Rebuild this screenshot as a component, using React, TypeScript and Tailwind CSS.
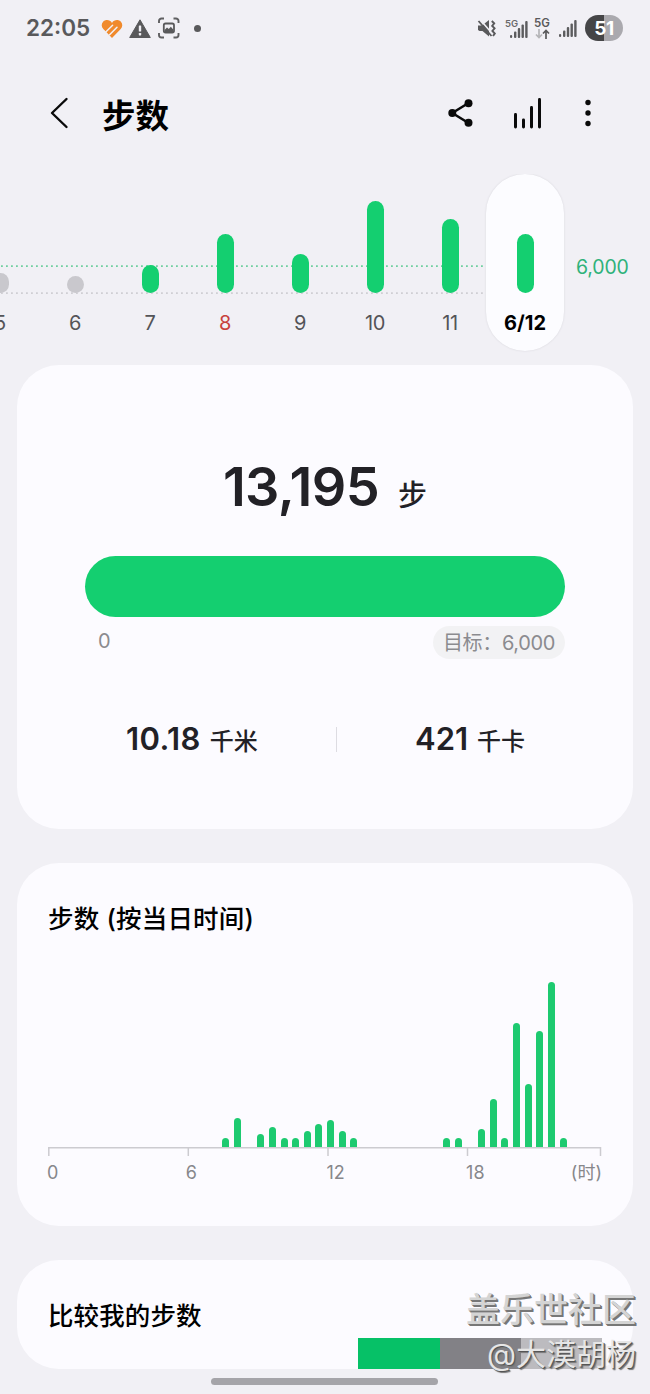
type Day = {
  label: string;
  height: number;
  reached: boolean;
  holiday?: boolean;
};

const days: Day[] = [
  { label: "5", height: 20, reached: false },
  { label: "6", height: 17, reached: false },
  { label: "7", height: 28, reached: true },
  { label: "8", height: 59, reached: true, holiday: true },
  { label: "9", height: 39, reached: true },
  { label: "10", height: 92, reached: true },
  { label: "11", height: 74, reached: true },
];

// One entry per half hour, value is the bar height in px
const halfHours: number[] = [
  0, 0, 0, 0, 0, 0, 0, 0, 0, 0, 0, 0, 0, 0, 0, 9, 29, 0, 13, 20, 9, 9, 16, 23, 27, 16, 9, 0, 0, 0,
  0, 0, 0, 0, 9, 9, 0, 18, 48, 9, 124, 63, 116, 165, 9, 0, 0, 0,
];

function SignalBars() {
  return (
    <svg width="18" height="18" viewBox="0 0 18 18" fill="#5c5c5e">
      <rect x="0" y="15" width="2.2" height="3" rx="1" />
      <rect x="4" y="11.5" width="2.4" height="6.5" rx="1" />
      <rect x="7.8" y="8" width="2.4" height="10" rx="1" />
      <rect x="11.5" y="4.5" width="2.4" height="13.5" rx="1" />
      <rect x="15.2" y="1" width="2.4" height="17" rx="1" />
    </svg>
  );
}

function StatusBar() {
  return (
    <div className="flex h-14 items-center justify-between pr-[27px] pl-[26px]">
      <div className="flex items-center">
        <span className="w-[75px] text-[22.5px] leading-[56px] font-semibold text-[#59595b]">22:05</span>
        <svg className="mt-px" width="22" height="20" viewBox="0 0 22 20" fill="none">
          <path
            d="M11 4C9 .5 4.500.3 2.300 2.600.2 4.800.2 7.800 2.300 10l8.700 9 8.700-9c2.100-2.200 2.100-5.200 0-7.400C17.500.3 13 .5 11 4Z"
            fill="#f08a2c"
          />
          <path d="M11.600 6.200 4.800 13M16 8.200 8.600 15.800" stroke="#f1f0f5" strokeWidth="1.5" strokeLinecap="round" />
          <path d="M2.800 11.800 8.500 17.800" stroke="#f1f0f5" strokeWidth="1.2" />
        </svg>
        <svg className="ml-[6px]" width="22" height="19" viewBox="0 0 22 19">
          <path d="M11 .8 21.3 18.500H.7Z" fill="#59595b" stroke="#59595b" strokeLinejoin="round" />
          <rect x="9.8" y="6.5" width="2.4" height="6" rx=".6" fill="#f1f0f5" />
          <rect x="9.8" y="14" width="2.4" height="2.4" rx=".6" fill="#f1f0f5" />
        </svg>
        <svg className="ml-[6px]" width="24" height="22" viewBox="0 0 24 22" fill="none">
          <path
            d="M2 6V4A2.5 2.5 0 0 1 4.500 1.500H7M16.500 1.500H19A2.500 2.500 0 0 1 21.500 4v2M21.500 16v2A2.500 2.500 0 0 1 19 20.500H16.500M7 20.500H4.500A2.500 2.500 0 0 1 2 18v-2"
            stroke="#5f5f61"
            strokeWidth="1.9"
          />
          <rect x="6.8" y="6.5" width="10.200" height="9" rx="1.8" stroke="#59595b" strokeWidth="1.8" />
          <path d="M7.5 13 10 10.500l1.800 1.600 2-2.400 2.500 2.800V15H7.500Z" fill="#59595b" />
        </svg>
        <span className="ml-[13px] size-[7px] rounded-full bg-[#59595b]" />
      </div>
      <div className="flex items-center">
        <svg width="20" height="19" viewBox="0 0 20 19" fill="#59595b">
          <path d="M1 6.500h4L12 1v16.500L5.500 12H2.500L1 11Z" />
          <path d="M3 .5 16 15.500" stroke="#f1f0f5" strokeWidth="1.600" />
          <path d="m1.500 2 13 15" stroke="#59595b" strokeWidth="1.800" />
          <path
            d="m14.800 2 2.400 2.400-2 2.500 2.400 2.500-2.200 2.600 2.400 2.500-1.800 2.500"
            fill="none"
            stroke="#59595b"
            strokeWidth="1.9"
          />
        </svg>
        <div className="ml-2 flex w-[23px] items-end">
          <span className="mb-[9px] w-[5px] text-[9.5px] leading-[10px] font-semibold text-[#6a6a6c]">5G</span>
          <SignalBars />
        </div>
        <div className="ml-[6px] flex w-[16px] flex-col items-center">
          <span className="text-[11.5px] leading-[11px] font-semibold text-[#59595b]">5G</span>
          <svg width="15" height="10" viewBox="0 0 15 10" fill="none" strokeWidth="1.7">
            <path d="M4 0v8.500M1 5.500l3 3 3-3" stroke="#b5b5b8" />
            <path d="M11 10V1.500M8 4.500l3-3 3 3" stroke="#59595b" />
          </svg>
        </div>
        <div className="ml-[9px]">
          <SignalBars />
        </div>
        <div className="ml-[8px] flex h-[26px] w-[38px] items-center justify-center rounded-full bg-linear-to-r from-[#454547] from-50% to-[#aaa9ae] to-50%">
          <span className="text-[19px] leading-none font-bold tracking-[-0.5px] text-white">51</span>
        </div>
      </div>
    </div>
  );
}

function Header() {
  return (
    <header className="flex h-[118px] items-center pl-[50px]">
      <svg className="-mt-1" width="19" height="32" viewBox="0 0 19 32" fill="none">
        <path
          d="M16.5 2 2 16l14.500 14"
          stroke="#0a0a0a"
          strokeWidth="2.4"
          strokeLinecap="round"
          strokeLinejoin="round"
        />
      </svg>
      <h1 className="mt-[2px] ml-[33px] flex-1 text-[33.5px] leading-[48px] font-bold text-black">步数</h1>
      <svg className="-mt-1" width="26" height="28" viewBox="0 0 26 28" fill="#0a0a0a">
        <path d="M20.5 4 4.300 14l16.200 10" fill="none" stroke="#0a0a0a" strokeWidth="2.5" />
        <circle cx="20.5" cy="4.2" r="4" />
        <circle cx="4.3" cy="14" r="4" />
        <circle cx="20.5" cy="23.8" r="4" />
      </svg>
      <svg className="-mt-1 ml-[39px]" width="30" height="32" viewBox="0 0 30 32" fill="#0a0a0a">
        <rect x="1" y="16" width="3" height="15.5" rx="1.4" />
        <rect x="9" y="21.5" width="3" height="10" rx="1.4" />
        <rect x="17" y="9" width="3" height="22.5" rx="1.4" />
        <rect x="25" y="1" width="3" height="30.5" rx="1.4" />
      </svg>
      <svg className="-mt-1 mr-[59px] ml-[42px]" width="6" height="28" viewBox="0 0 6 28" fill="#0a0a0a">
        <circle cx="3" cy="3.5" r="2.7" />
        <circle cx="3" cy="14" r="2.7" />
        <circle cx="3" cy="24.5" r="2.7" />
      </svg>
    </header>
  );
}

function WeekChart() {
  return (
    <section className="relative flex h-[191px] overflow-hidden">
      <svg className="absolute top-0 left-0" width="485" height="130" fill="none" strokeWidth="1.8">
        <path d="M1 92.200h484" stroke="#6fcf9f" strokeDasharray="1.8 3.2" />
        <path d="M1 119.200h484" stroke="#cfced3" strokeDasharray="1.8 3.2" />
      </svg>
      <div className="relative -ml-[37.5px] flex shrink-0">
        {days.map((day) => (
          <div key={day.label} className="flex w-[75px] flex-col items-center">
            <div className="flex h-[119px] items-end">
              <div
                className={`w-[17px] rounded-full ${day.reached ? "bg-[#14cf70]" : "bg-[#c9c8cd]"}`}
                style={{ height: day.height }}
              />
            </div>
            <span
              className={`mt-[18px] text-[20px] leading-6 tracking-[-0.3px] ${
                day.holiday ? "text-[#c8403c]" : "text-[#545458]"
              }`}
            >
              {day.label}
            </span>
          </div>
        ))}
      </div>
      <div className="-ml-[1.5px] flex h-[177px] w-[78px] shrink-0 flex-col items-center rounded-full bg-[#fcfcff] shadow-[0_0_2px_#d4d3d9]">
        <div className="flex h-[119px] items-end">
          <div className="h-[59px] w-[17px] rounded-full bg-[#14cf70]" />
        </div>
        <span className="mt-[18px] text-[20px] leading-6 font-bold text-black">6/12</span>
      </div>
      <span className="mt-[81px] ml-3 text-[19.5px] leading-6 tracking-[-0.15px] text-[#2fb27a]">6,000</span>
    </section>
  );
}

function SummaryCard() {
  return (
    <section className="mx-[17px] flex h-[464px] flex-col rounded-[42px] bg-[#fcfbff] px-[68px]">
      <div className="mt-[86px] flex h-[72px] items-baseline justify-center text-[#222126]">
        <span className="text-[54px] leading-[72px] font-semibold tracking-[-0.6px]">13,195</span>
        <span className="ml-[19px] text-[29px] leading-[40px] font-medium">步</span>
      </div>
      <div className="mt-[33px] h-[61px] rounded-full bg-[#14cf70]" />
      <div className="mt-[9px] flex h-[33px] justify-between text-[20px] text-[#8b8b8f]">
        <span className="ml-[13px] leading-[31px]">0</span>
        <span className="flex h-[33px] w-[132px] items-center justify-center rounded-full bg-[#f2f2f4] tracking-[-0.35px] whitespace-nowrap">
          目标：6,000
        </span>
      </div>
      <div className="mt-[58px] flex h-[44px] items-center text-[#222126]">
        <div className="flex w-[251px] items-baseline pl-[41px]">
          <span className="text-[31px] leading-[44px] font-semibold tracking-[0.4px]">10.18</span>
          <span className="ml-[9px] text-[24px] leading-[32px] font-medium">千米</span>
        </div>
        <div className="h-[25px] w-px bg-[#dddce2]" />
        <div className="flex items-baseline pl-[78px]">
          <span className="text-[31px] leading-[44px] font-semibold">421</span>
          <span className="ml-[9px] text-[24px] leading-[32px] font-medium">千卡</span>
        </div>
      </div>
    </section>
  );
}

function HourlyCard() {
  return (
    <section className="mx-[17px] mt-[34px] flex h-[363px] flex-col rounded-[42px] bg-[#fcfbff] px-[31px]">
      <h2 className="mt-[38px] h-[36px] text-[25.5px] leading-[36px] font-medium tracking-[0.2px] text-black">
        步数 (按当日时间)
      </h2>
      <div className="mt-[30px] flex h-[180px] w-[553px] items-end overflow-hidden">
        {halfHours.map((height, index) => (
          <div key={index} className="w-[11.64px] shrink-0">
            <div className="w-[7px] rounded-t-full bg-[#1dca70]" style={{ height }} />
          </div>
        ))}
      </div>
      <svg width="554" height="9" fill="none" stroke="#cccbd0" strokeWidth="1.5">
        <path d="M0 .8h553M.8 0v9M140.300 0v9M280 0v9M419.500 0v9M552.500 0v9" />
      </svg>
      <div className="mt-px -ml-px flex h-[32px] text-[18px] leading-[32px] text-[#87878b]">
        <span className="w-[139px]">0</span>
        <span className="w-[141px]">6</span>
        <span className="w-[140px]">12</span>
        <span className="w-[105px]">18</span>
        <span className="whitespace-nowrap">(时)</span>
      </div>
    </section>
  );
}

function CompareCard() {
  return (
    <section className="mx-[17px] mt-[34px] flex h-[109px] flex-col overflow-hidden rounded-[42px] bg-[#fcfbff]">
      <h2 className="mt-[38px] ml-[31px] h-[36px] text-[25.5px] leading-[36px] font-medium tracking-[0.1px] text-black">
        比较我的步数
      </h2>
      <div className="mt-[4px] ml-[341px] flex h-[31px]">
        <div className="w-[82px] bg-[#06c167]" />
        <div className="w-[81px] bg-[#828186]" />
        <div className="w-[81px] bg-[#bcbbbf]" />
      </div>
    </section>
  );
}

export default function App() {
  return (
    <main
      lang="zh-CN"
      className="relative h-[1394px] w-[650px] overflow-hidden bg-[#f1f0f5] font-['Inter','Noto_Sans_CJK_SC',sans-serif]"
    >
      <StatusBar />
      <Header />
      <WeekChart />
      <SummaryCard />
      <HourlyCard />
      <CompareCard />
      <div className="mt-[9px] ml-[211px] h-[7px] w-[227px] rounded-full bg-[#a5a4a9]" />
      <div className="absolute right-[14px] bottom-[20px] flex flex-col items-end whitespace-nowrap">
        <span className="text-[34px] leading-[48px] font-medium text-[#d4d4d4] [text-shadow:1px_1px_0_#777,2px_2px_0_#777]">
          盖乐世社区
        </span>
        <span className="text-[30px] leading-[40px] text-[#e6e6e6] [text-shadow:1px_1px_0_#555,2px_2px_1px_#777]">
          @大漠胡杨
        </span>
      </div>
    </main>
  );
}
